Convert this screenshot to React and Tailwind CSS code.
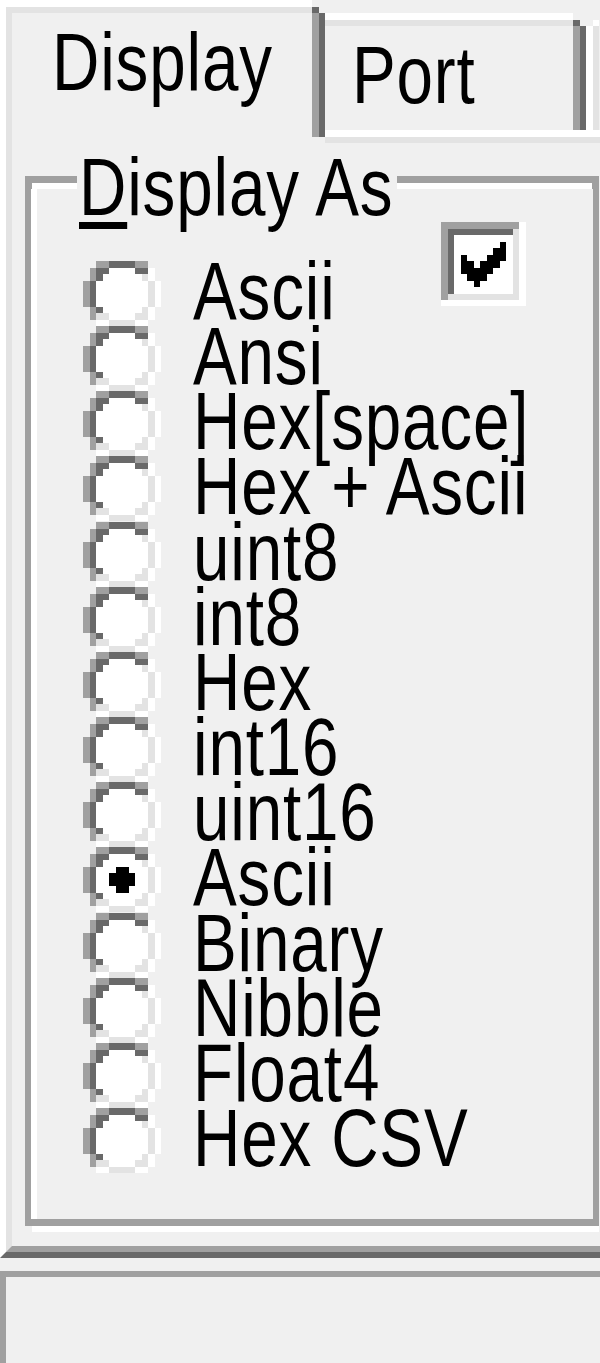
import React from "react";

const G = "#a0a0a0";
const D = "#696969";
const W = "#ffffff";
const L = "#e3e3e3";
const K = "#000000";

function Label({ children }) {
  return (
    <span className="inline-block origin-left scale-x-[0.81] tracking-[1px] whitespace-nowrap text-[81px] leading-[60px] text-black font-['Liberation_Sans',Arial,sans-serif]">
      {children}
    </span>
  );
}

function Pixels({ cells, vb, w, h }) {
  return (
    <svg width={w} height={h} viewBox={vb} shapeRendering="crispEdges" className="shrink-0 block">
      {cells.map(([x, y, cw, ch, c], i) => (
        <rect key={i} x={x} y={y} width={cw} height={ch} fill={c} />
      ))}
    </svg>
  );
}

const RADIO = [
  [2, 1, 2, 1, G], [8, 1, 2, 1, G],
  [1, 2, 1, 2, G], [10, 2, 1, 2, W],
  [0, 4, 1, 4, G], [11, 4, 1, 4, W],
  [1, 8, 1, 2, G], [10, 8, 1, 2, W],
  [2, 10, 2, 1, W], [8, 10, 2, 1, W],
  [4, 1, 4, 1, D],
  [2, 2, 2, 1, D], [8, 2, 2, 1, D],
  [2, 3, 1, 1, D], [9, 3, 1, 1, L],
  [1, 4, 1, 4, D], [10, 4, 1, 4, L],
  [2, 8, 1, 1, D], [9, 8, 1, 1, L],
  [2, 9, 2, 1, L], [8, 9, 2, 1, L],
  [4, 10, 4, 1, L],
  [4, 2, 4, 1, W], [3, 3, 6, 1, W], [2, 4, 8, 4, W], [3, 8, 6, 1, W], [4, 9, 4, 1, W],
];
const BULLET = [[5, 4, 2, 1, K], [4, 5, 4, 2, K], [5, 7, 2, 1, K]];

function Radio({ checked }) {
  return (
    <Pixels
      cells={checked ? RADIO.concat(BULLET) : RADIO}
      vb="0 1 12 10"
      w={78.24}
      h={65.2}
    />
  );
}

const CHECKBOX = [
  [0, 0, 12, 1, G], [0, 0, 1, 12, G],
  [1, 1, 10, 1, D], [1, 1, 1, 10, D],
  [11, 1, 1, 11, L], [1, 11, 11, 1, L],
  [12, 0, 1, 13, W], [0, 12, 13, 1, W],
  [2, 2, 9, 9, W],
  [3, 5, 1, 3, K], [4, 6, 1, 3, K], [5, 7, 1, 3, K], [6, 6, 1, 3, K],
  [7, 5, 1, 3, K], [8, 4, 1, 3, K], [9, 3, 1, 3, K],
];

const ITEMS = [
  "Ascii", "Ansi", "Hex[space]", "Hex + Ascii", "uint8", "int8", "Hex",
  "int16", "uint16", "Ascii", "Binary", "Nibble", "Float4", "Hex CSV",
];

function TabRightEdge() {
  return (
    <div className="flex flex-col w-[13.04px] shrink-0">
      <div className="h-[6.52px] shrink-0" />
      <div className="h-[6.52px] flex shrink-0">
        <div className="w-[6.52px] bg-[#696969]" />
      </div>
      <div className="flex-1 flex">
        <div className="w-[6.52px] bg-[#a0a0a0]" />
        <div className="w-[6.52px] bg-[#696969]" />
      </div>
    </div>
  );
}

export default function App() {
  return (
    <div className="w-[600px] h-[1363px] overflow-hidden bg-[#f0f0f0] flex flex-col">
      {/* tab control */}
      <div className="h-[1258.36px] w-[600px] shrink-0 flex flex-col border-l-[6.52px] border-l-white border-b-[6.52px] border-b-[#696969]">
        {/* tab strip */}
        <div className="flex h-[136.92px] shrink-0">
          {/* active tab */}
          <div className="flex w-[319.48px] shrink-0">
            <div className="flex flex-col w-[306.44px] shrink-0">
              <div className="h-[6.52px] bg-white shrink-0" />
              <div className="flex-1 flex items-start border-t-[6.52px] border-t-[#e3e3e3] border-l-[6.52px] border-l-[#e3e3e3] pl-[40px] pt-[19.9px]">
                <Label>Display</Label>
              </div>
            </div>
            <TabRightEdge />
          </div>
          {/* inactive tabs */}
          <div className="flex-1 flex flex-col">
            <div className="h-[13.04px] shrink-0" />
            <div className="h-[117.36px] flex shrink-0">
              <div className="w-[247.76px] shrink-0 flex flex-col">
                <div className="h-[6.52px] bg-white shrink-0" />
                <div className="flex-1 flex items-start border-t-[6.52px] border-t-[#e3e3e3] pl-[27px] pt-[19.9px]">
                  <Label>Port</Label>
                </div>
              </div>
              <TabRightEdge />
              <div className="flex flex-col w-[13.04px] shrink-0">
                <div className="h-[6.52px] shrink-0" />
                <div className="h-[6.52px] flex shrink-0">
                  <div className="w-[6.52px]" />
                  <div className="w-[6.52px] bg-white" />
                </div>
                <div className="flex-1 flex">
                  <div className="w-[6.52px] bg-white" />
                  <div className="w-[6.52px] bg-[#e3e3e3]" />
                </div>
              </div>
            </div>
            <div className="h-[6.52px] bg-white shrink-0" />
          </div>
        </div>

        {/* tab page */}
        <div className="flex-1 flex flex-col border-l-[6.52px] border-l-[#e3e3e3] border-b-[6.52px] border-b-[#a0a0a0]">
          <div className="h-[6.52px] flex shrink-0">
            <div className="w-[312.96px] shrink-0" />
            <div className="flex-1 bg-[#e3e3e3]" />
          </div>

          {/* group box */}
          <div className="mt-[32.6px] ml-[13.04px] w-[573.76px] h-[1056.24px] shrink-0 flex flex-col">
            <div className="flex h-[13.04px] shrink-0">
              <div className="w-[52.16px] shrink-0 flex flex-col">
                <div className="h-[6.52px] bg-[#a0a0a0]" />
                <div className="h-[6.52px] flex">
                  <div className="w-[6.52px] bg-[#a0a0a0]" />
                  <div className="flex-1 bg-white" />
                </div>
              </div>
              <div className="w-[319.48px] shrink-0 pl-[1.7px] flex items-start">
                <div className="-mt-[19.04px] flex">
                  <Label>
                    <span className="underline decoration-[6.52px] underline-offset-[7px]">D</span>isplay As
                  </Label>
                </div>
              </div>
              <div className="flex-1 flex flex-col">
                <div className="h-[6.52px] bg-[#a0a0a0]" />
                <div className="h-[6.52px] flex">
                  <div className="flex-1 bg-white" />
                  <div className="w-[6.52px] bg-[#a0a0a0]" />
                </div>
              </div>
            </div>

            <div className="flex-1 flex border-l-[6.52px] border-l-[#a0a0a0] border-r-[6.52px] border-r-[#a0a0a0]">
              <div className="flex-1 flex items-start border-l-[6.52px] border-l-white">
                <div className="ml-[45.64px] mt-[71.72px] w-[358.6px] shrink-0 flex flex-col">
                  {ITEMS.map((t, i) => (
                    <div key={i} className="h-[65.2px] flex items-start shrink-0">
                      <Radio checked={i === 9} />
                      <div className="ml-[32.6px] flex">
                        <Label>{t}</Label>
                      </div>
                    </div>
                  ))}
                </div>
                <div className="mt-[32.6px] shrink-0">
                  <Pixels cells={CHECKBOX} vb="0 0 13 13" w={84.76} h={84.76} />
                </div>
              </div>
            </div>

            <div className="h-[6.52px] bg-[#a0a0a0] shrink-0" />
            <div className="h-[6.52px] flex shrink-0">
              <div className="w-[6.52px]" />
              <div className="flex-1 bg-white" />
            </div>
          </div>
        </div>
      </div>

      {/* status area */}
      <div className="mt-[13.04px] flex-1 border-t-[6.52px] border-t-[#a0a0a0] border-l-[6.52px] border-l-[#a0a0a0]" />
    </div>
  );
}
